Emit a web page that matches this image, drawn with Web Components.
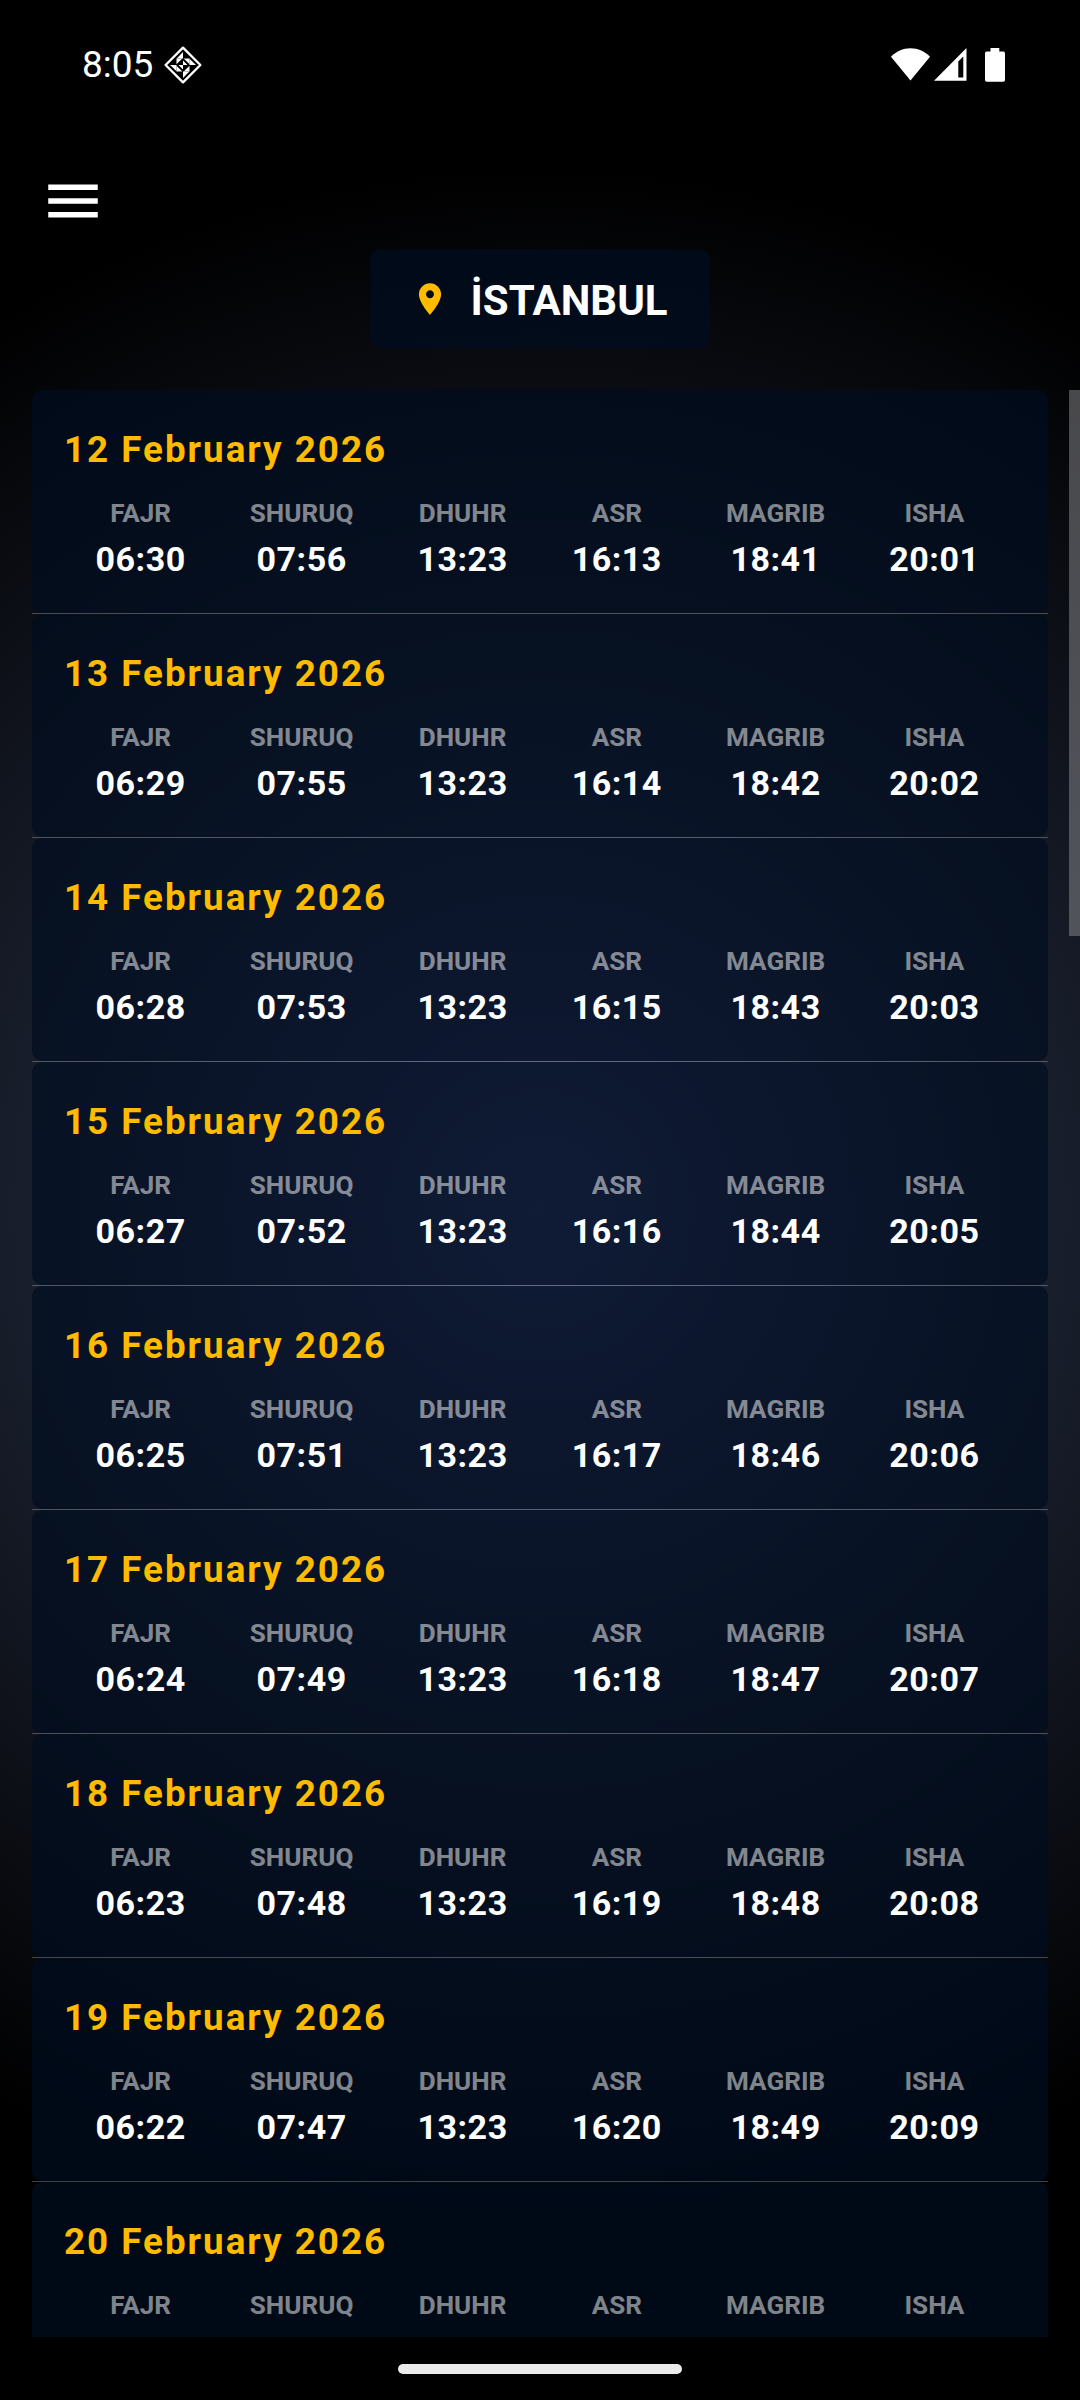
<!DOCTYPE html>
<html lang="en">
<head>
<meta charset="utf-8">
<title>Prayer Times</title>
<style>
  html, body { margin: 0; height: 2400px; background: #000; }
  body { font-family: Roboto, "Noto Sans", sans-serif; color: #fff; overflow: hidden; }
</style>
</head>
<body>
<prayer-app></prayer-app>

<script>
function makeTemplate(html) {
  const template = document.createElement("template");
  template.innerHTML = html;
  return template;
}

const statusTemplate = makeTemplate(`
<style>
  :host { display: flex; align-items: center; height: 128px; padding: 1px 75px 0 82px; box-sizing: border-box; }
  .clock { font-size: 37px; line-height: 44px; margin-right: 10px; padding-top: 1px; }
  .spacer { flex: 1; }
  svg { display: block; }
  .wifi { margin-right: 4px; }
  .signal { margin-right: 18px; }
</style>
  <span class="clock"><slot></slot></span>
  <svg width="40" height="40" viewBox="-20 -20 40 40">
    <path d="M0-17.400 17.400 0 0 17.400-17.400 0Z" fill="none" stroke="#fff" stroke-width="2.3" stroke-linejoin="round"/>
    <g fill="#fff">
      <path d="M0-13V-6.500H-6.300ZM.7-6.500H6.500V-.7Z"/>
      <path d="M0-13V-6.500H-6.300ZM.7-6.500H6.500V-.7Z" transform="rotate(90)"/>
      <path d="M0-13V-6.500H-6.300ZM.7-6.500H6.500V-.7Z" transform="rotate(180)"/>
      <path d="M0-13V-6.500H-6.300ZM.7-6.500H6.500V-.7Z" transform="rotate(270)"/>
      <path d="M0 0V-4.500L4.500 0ZM0 0V4.500L-4.500 0Z"/>
    </g>
  </svg>
  <div class="spacer"></div>
  <svg class="wifi" width="39" height="33" viewBox="0 0 39 33">
    <path d="M19.5 32.5 0 8.7C5 3.300 12 .2 19.500 .2S34 3.300 39 8.700Z" fill="#fff"/>
  </svg>
  <svg class="signal" width="33" height="33" viewBox="0 0 33 33">
    <path d="M32.500 0V32.800H0ZM29.300 8.500 24.300 13.500V29.500H29.300Z" fill="#fff" fill-rule="evenodd"/>
  </svg>
  <svg width="20" height="34" viewBox="0 0 20 34">
    <path d="M5.500 0H14.300V3.500H18.200Q20 3.500 20 5.300V32Q20 33.800 18.200 33.800H1.800Q0 33.800 0 32V5.300Q0 3.500 1.800 3.500H5.500Z" fill="#fff"/>
  </svg>
`);

class StatusBar extends HTMLElement {
  constructor() {
    super();
    this.attachShadow({ mode: "open" });
    this.shadowRoot.appendChild(statusTemplate.content.cloneNode(true));
  }
}

const menuTemplate = makeTemplate(`
<style>
  :host { display: block; width: 66px; height: 66px; }
  svg { display: block; }
</style>
  <svg width="66" height="66" viewBox="0 0 24 24">
    <path d="M3 18h18v-2H3v2zm0-5h18v-2H3v2zm0-7v2h18V6H3z" fill="#fff"/>
  </svg>
`);

class MenuButton extends HTMLElement {
  constructor() {
    super();
    this.attachShadow({ mode: "open" });
    this.shadowRoot.appendChild(menuTemplate.content.cloneNode(true));
  }
}

const chipTemplate = makeTemplate(`
<style>
  :host {
    display: flex; align-items: center; box-sizing: border-box;
    width: 340px; height: 99px; padding-left: 41px;
    background: var(--panel); border-radius: 10px;
  }
  svg { display: block; margin-right: 21.5px; }
  span { font-size: 42px; font-weight: 700; line-height: 50px; padding-top: 5px; }
</style>
  <svg width="38" height="38" viewBox="0 0 24 24">
    <path d="M12 2C8.130 2 5 5.130 5 9c0 5.250 7 13 7 13s7-7.750 7-13c0-3.870-3.130-7-7-7zm0 9.500c-1.380 0-2.500-1.120-2.500-2.500s1.120-2.500 2.500-2.500 2.500 1.120 2.500 2.500-1.120 2.500-2.500 2.500z" fill="#ffbb00"/>
  </svg>
  <span><slot></slot></span>
`);

class CityChip extends HTMLElement {
  constructor() {
    super();
    this.attachShadow({ mode: "open" });
    this.shadowRoot.appendChild(chipTemplate.content.cloneNode(true));
  }
}

const timeTemplate = makeTemplate(`
<style>
  :host { display: flex; flex-direction: column; align-items: center; min-width: 90px; }
  .label { font-size: 26.100px; font-weight: 700; line-height: 32px; color: rgba(255, 255, 255, .5); }
  .time { font-size: 34px; font-weight: 700; line-height: 40px; margin-top: 10px; letter-spacing: .5px; }
</style>
  <span class="label"></span>
  <span class="time"></span>
`);

class PrayerTime extends HTMLElement {
  constructor() {
    super();
    this.attachShadow({ mode: "open" });
    this.shadowRoot.appendChild(timeTemplate.content.cloneNode(true));
  }

  connectedCallback() {
    this.shadowRoot.querySelector(".label").textContent = this.getAttribute("label");
    this.shadowRoot.querySelector(".time").textContent = this.getAttribute("time");
  }
}

const dayTemplate = makeTemplate(`
<style>
  :host { display: block; height: 224px; box-sizing: border-box; border-bottom: 1px solid rgba(255, 255, 255, .25); flex: none; }
  .card { height: 223px; box-sizing: border-box; padding: 38px 36.5px 0 32px; background: var(--panel); border-radius: 10px; }
  .date { font-size: 36.75px; font-weight: 700; line-height: 44px; letter-spacing: 2px; color: #ffbb00; }
  .times { display: flex; justify-content: space-around; margin: 25px 0 0 -.5px; }
</style>
  <div class="card">
    <div class="date"></div>
    <div class="times"></div>
  </div>
`);

const PRAYERS = ["FAJR", "SHURUQ", "DHUHR", "ASR", "MAGRIB", "ISHA"];

class PrayerDay extends HTMLElement {
  constructor() {
    super();
    this.attachShadow({ mode: "open" });
    this.shadowRoot.appendChild(dayTemplate.content.cloneNode(true));
  }

  connectedCallback() {
    this.shadowRoot.querySelector(".date").textContent = this.getAttribute("date");
    const times = (this.getAttribute("times") || "").split(" ");
    this.shadowRoot.querySelector(".times").innerHTML = PRAYERS.map(
      (name, i) => `<prayer-time label="${name}" time="${times[i] || ""}"></prayer-time>`
    ).join("");
  }
}

const appTemplate = makeTemplate(`
<style>
  :host {
    --panel: rgba(0, 13, 32, .7);
    display: flex; flex-direction: column;
    width: 1080px; height: 2400px; overflow: hidden;
    background: radial-gradient(circle 1045px at 540px 1210px, #363d6c 0, #171c29 53%, #000 100%) #000;
  }
  status-bar { flex: none; }
  header { height: 262px; flex: none; display: flex; flex-direction: column; padding: 40px 40px 0; box-sizing: border-box; }
  city-chip { align-self: center; margin-top: 15px; }
  main { height: 1947px; flex: none; display: flex; justify-content: space-between; overflow: hidden; }
  .list { width: 1016px; margin-left: 32px; display: flex; flex-direction: column; }
  .scrollbar { width: 11px; height: 546px; background: rgba(142, 142, 146, .5); }
  footer { flex: 1; display: flex; align-items: flex-start; justify-content: center; padding-top: 27px; }
  .home { width: 284px; height: 10px; border-radius: 5px; background: #ebebeb; }
</style>
  <status-bar>8:05</status-bar>
  <header>
    <menu-button></menu-button>
    <city-chip>İSTANBUL</city-chip>
  </header>
  <main>
    <div class="list">
      <prayer-day date="12 February 2026" times="06:30 07:56 13:23 16:13 18:41 20:01"></prayer-day>
      <prayer-day date="13 February 2026" times="06:29 07:55 13:23 16:14 18:42 20:02"></prayer-day>
      <prayer-day date="14 February 2026" times="06:28 07:53 13:23 16:15 18:43 20:03"></prayer-day>
      <prayer-day date="15 February 2026" times="06:27 07:52 13:23 16:16 18:44 20:05"></prayer-day>
      <prayer-day date="16 February 2026" times="06:25 07:51 13:23 16:17 18:46 20:06"></prayer-day>
      <prayer-day date="17 February 2026" times="06:24 07:49 13:23 16:18 18:47 20:07"></prayer-day>
      <prayer-day date="18 February 2026" times="06:23 07:48 13:23 16:19 18:48 20:08"></prayer-day>
      <prayer-day date="19 February 2026" times="06:22 07:47 13:23 16:20 18:49 20:09"></prayer-day>
      <prayer-day date="20 February 2026"></prayer-day>
    </div>
    <div class="scrollbar"></div>
  </main>
  <footer><div class="home"></div></footer>
`);

class PrayerApp extends HTMLElement {
  constructor() {
    super();
    this.attachShadow({ mode: "open" });
    this.shadowRoot.appendChild(appTemplate.content.cloneNode(true));
  }
}

customElements.define("status-bar", StatusBar);
customElements.define("menu-button", MenuButton);
customElements.define("city-chip", CityChip);
customElements.define("prayer-time", PrayerTime);
customElements.define("prayer-day", PrayerDay);
customElements.define("prayer-app", PrayerApp);
</script>
</body>
</html>
